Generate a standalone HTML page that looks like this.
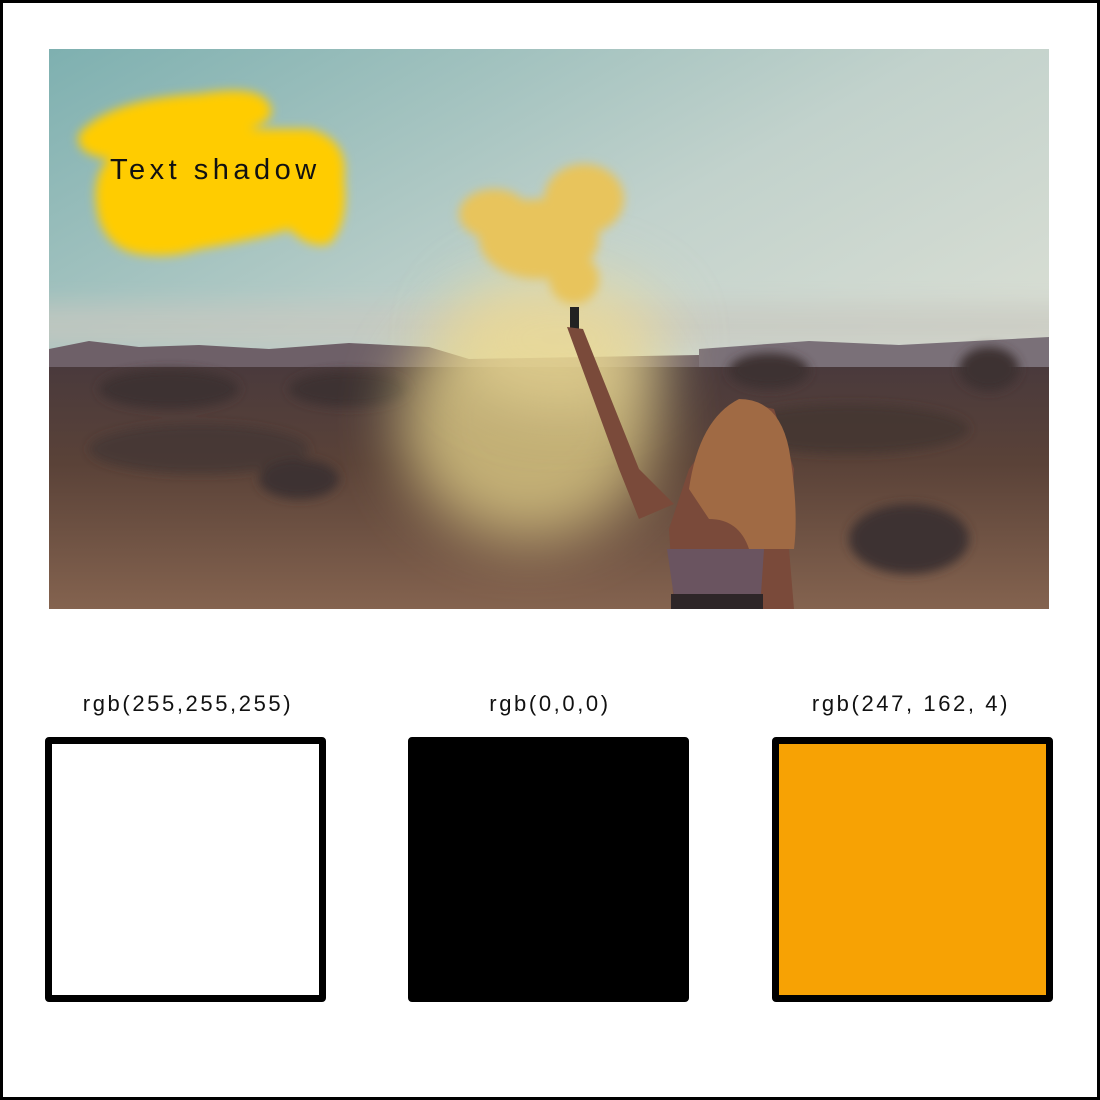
<!DOCTYPE html>
<html><head><meta charset="utf-8"><style>
html,body{margin:0;padding:0;background:#fff}
.page{position:relative;width:1100px;height:1100px;box-sizing:border-box;border:3px solid #000;background:#fff;overflow:hidden;font-family:"Liberation Sans",sans-serif}
.photo{position:absolute;left:46px;top:46px;width:1000px;height:560px}
.lbl{position:absolute;top:688px;font-size:22px;letter-spacing:2.6px;color:#111;text-align:center;width:300px}
.sw{position:absolute;top:734px;width:281px;height:265px;box-sizing:border-box;border:7px solid #000;border-radius:4px}
</style></head><body><div class="page">
<svg class="photo" viewBox="0 0 1000 560" width="1000" height="560">
<defs>
<linearGradient id="sky" x1="0" y1="0" x2="1" y2="1">
<stop offset="0" stop-color="#7eb0b0"/><stop offset="0.45" stop-color="#c2d2cc"/><stop offset="1" stop-color="#ece8da"/></linearGradient>
<linearGradient id="gr" x1="0" y1="0" x2="0" y2="1">
<stop offset="0" stop-color="#4a3a3c"/><stop offset="0.4" stop-color="#5a4238"/><stop offset="1" stop-color="#84634f"/></linearGradient>
<filter id="b4" x="-50%" y="-50%" width="200%" height="200%"><feGaussianBlur stdDeviation="5"/></filter>
<filter id="b10" x="-50%" y="-50%" width="200%" height="200%"><feGaussianBlur stdDeviation="12"/></filter>
<filter id="b30" x="-100%" y="-100%" width="300%" height="300%"><feGaussianBlur stdDeviation="30"/></filter>
</defs>
<rect width="1000" height="560" fill="url(#sky)"/>
<rect x="-50" y="255" width="1100" height="45" fill="#c8c8c0" opacity="0.7" filter="url(#b10)"/>
<path d="M0 300 L40 292 L90 298 L150 296 L220 300 L300 294 L380 298 L420 310 L1000 300 L1000 330 L0 330Z" fill="#6e6068"/>
<path d="M650 300 L760 292 L850 296 L1000 288 L1000 320 L650 320Z" fill="#7a7078"/>
<rect y="318" width="1000" height="242" fill="url(#gr)"/>
<g fill="#3e3230" filter="url(#b4)">
<ellipse cx="120" cy="340" rx="70" ry="20"/><ellipse cx="300" cy="340" rx="60" ry="18"/>
<ellipse cx="720" cy="322" rx="40" ry="18"/><ellipse cx="940" cy="320" rx="30" ry="22"/>
<ellipse cx="860" cy="490" rx="60" ry="35"/><ellipse cx="250" cy="430" rx="40" ry="20"/>
<ellipse cx="800" cy="380" rx="120" ry="25" opacity="0.7"/><ellipse cx="150" cy="400" rx="110" ry="25" opacity="0.6"/>
</g>
<ellipse cx="480" cy="370" rx="130" ry="120" fill="#e6d48a" opacity="0.75" filter="url(#b30)"/>
<ellipse cx="510" cy="290" rx="110" ry="70" fill="#eedc9a" opacity="0.6" filter="url(#b30)"/>
<g fill="#e8c45c" filter="url(#b4)">
<ellipse cx="490" cy="190" rx="60" ry="40"/><ellipse cx="535" cy="150" rx="40" ry="35"/>
<ellipse cx="445" cy="165" rx="35" ry="25"/><ellipse cx="525" cy="230" rx="25" ry="25"/>
</g>
<rect x="521" y="258" width="9" height="22" fill="#222"/>
<path d="M518 278 L534 280 L590 420 L625 455 L590 470 L570 420Z" fill="#7a4a3a"/>
<path d="M625 560 L620 480 L640 420 L690 352 L725 360 L745 420 L740 500 L745 560Z" fill="#7a4a3a"/>
<path d="M640 440 Q650 370 690 350 Q730 350 740 400 Q750 460 745 500 L700 500 Q690 470 660 470Z" fill="#a06a44"/>
<path d="M618 500 L715 500 L712 545 L625 548Z" fill="#6a5460"/>
<rect x="622" y="545" width="92" height="15" fill="#2e2628"/>
<g fill="#ffcc00" filter="url(#b4)">
<path d="M30 85 Q60 50 150 45 Q210 35 220 55 Q230 70 200 80 L260 80 Q300 90 295 130 Q300 175 280 195 Q260 200 240 180 Q210 190 150 200 Q120 210 90 205 Q60 200 50 170 Q40 130 60 110 Q25 105 30 85Z"/>
</g>
<text x="61" y="130" font-family="'Liberation Sans',sans-serif" font-size="29" letter-spacing="4.5" fill="#111">Text shadow</text>
</svg>
<div class="lbl" style="left:35px">rgb(255,255,255)</div>
<div class="lbl" style="left:397px">rgb(0,0,0)</div>
<div class="lbl" style="left:758px">rgb(247, 162, 4)</div>
<div class="sw" style="left:42px;background:#fff"></div>
<div class="sw" style="left:405px;background:#000"></div>
<div class="sw" style="left:769px;background:#f7a204"></div>
</div></body></html>
